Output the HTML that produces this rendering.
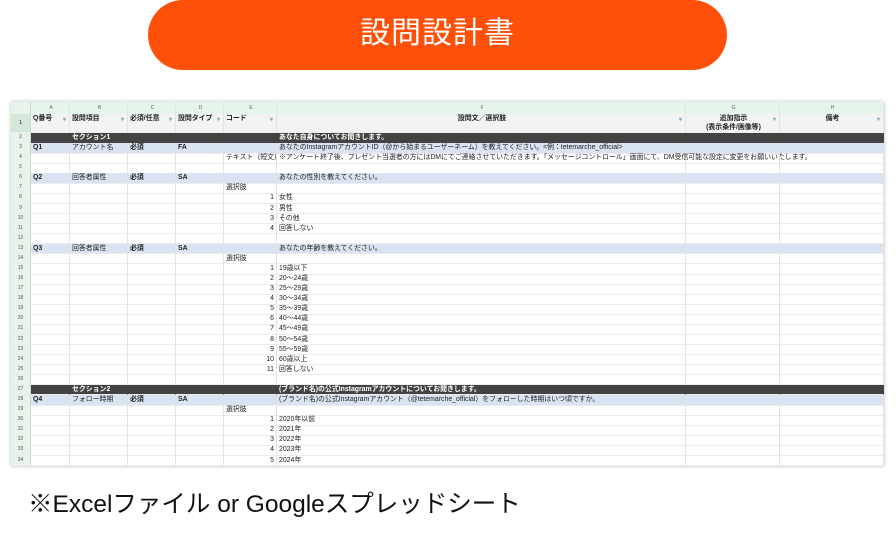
<!DOCTYPE html>
<html><head><meta charset="utf-8"><style>
*{margin:0;padding:0;box-sizing:border-box}
body{width:896px;height:539px;background:#fff;position:relative;overflow:hidden;font-family:"Liberation Sans","Noto Sans CJK JP",sans-serif}
.pill{position:absolute;left:148px;top:0;width:579px;height:70px;background:#fe5009;border-radius:35px;color:#fff;font-size:30px;text-align:center;line-height:68px;letter-spacing:1px}
.sheet{position:absolute;left:11px;top:102px;width:873px;box-shadow:0 0 4px rgba(0,0,0,.25);background:#fff}
.r{display:grid;grid-template-columns:20px 39px 58px 48px 48px 53px 409px 94px 104px;height:10.08px;font-size:6.9px;color:#222}
.r>span{border-right:1px solid #e3e3e3;border-bottom:1px solid #ececec;white-space:nowrap;overflow:visible;padding-left:2px;line-height:9.5px}
.r>span:first-child{background:#e8f3ea;color:#555;text-align:center;padding:0;font-size:5px;border-right:1px solid #cfd8d2}
.h0{height:12px}
.h0>span{background:#f8f9fa;text-align:center;font-size:5px!important;color:#666;line-height:12px!important}
.h0>span:not(:first-child){background:#e6f4ea}
.h1{height:19px;font-weight:bold}
.h1>span{background:#f3f3f3;line-height:8.5px;position:relative;padding-top:1px;overflow:hidden!important}
.h1>span:first-child{line-height:19px;background:#d3e8d8}
.h1 em{position:absolute;right:3px;top:2px;font-style:normal;color:#8aa;font-size:6px}
.s>span:not(:first-child){background:#434343;color:#fff;font-weight:bold;border-right-color:#434343}
.q>span:not(:first-child){background:#dae3f2}
.q>span:nth-child(2),.q>span:nth-child(4),.q>span:nth-child(5){font-weight:bold}
.n{text-align:right;padding-right:2px}
.foot{position:absolute;left:28px;top:485px;font-size:24.5px;color:#111}
</style></head><body>
<div class="pill">設問設計書</div>
<div class="sheet">
<div class="r h0"><span></span><span>A</span><span>B</span><span>C</span><span>D</span><span>E</span><span>F</span><span>G</span><span>H</span></div>
<div class="r h1"><span>1</span><span>Q番号<em>▾</em></span><span>設問項目<em>▾</em></span><span>必須/任意<em>▾</em></span><span>設問タイプ<em>▾</em></span><span>コード<em>▾</em></span><span style="text-align:center">設問文／選択肢<em>▾</em></span><span style="text-align:center">追加指示<br>(表示条件/画像等)<em>▾</em></span><span style="text-align:center">備考<em>▾</em></span></div>
<div class="r s"><span>2</span><span></span><span>セクション1</span><span></span><span></span><span></span><span>あなた自身についてお聞きします。</span><span></span><span></span></div>
<div class="r q"><span>3</span><span>Q1</span><span>アカウント名</span><span>必須</span><span>FA</span><span></span><span>あなたのInstagramアカウントID（@から始まるユーザーネーム）を教えてください。&lt;例：tetemarche_official&gt;</span><span></span><span></span></div>
<div class="r"><span>4</span><span></span><span></span><span></span><span></span><span>テキスト（短文）</span><span>※アンケート終了後、プレゼント当選者の方にはDMにてご連絡させていただきます。「メッセージコントロール」画面にて、DM受信可能な設定に変更をお願いいたします。</span><span></span><span></span></div>
<div class="r"><span>5</span><span></span><span></span><span></span><span></span><span></span><span></span><span></span><span></span></div>
<div class="r q"><span>6</span><span>Q2</span><span>回答者属性</span><span>必須</span><span>SA</span><span></span><span>あなたの性別を教えてください。</span><span></span><span></span></div>
<div class="r"><span>7</span><span></span><span></span><span></span><span></span><span>選択肢</span><span></span><span></span><span></span></div>
<div class="r"><span>8</span><span></span><span></span><span></span><span></span><span class="n">1</span><span>女性</span><span></span><span></span></div>
<div class="r"><span>9</span><span></span><span></span><span></span><span></span><span class="n">2</span><span>男性</span><span></span><span></span></div>
<div class="r"><span>10</span><span></span><span></span><span></span><span></span><span class="n">3</span><span>その他</span><span></span><span></span></div>
<div class="r"><span>11</span><span></span><span></span><span></span><span></span><span class="n">4</span><span>回答しない</span><span></span><span></span></div>
<div class="r"><span>12</span><span></span><span></span><span></span><span></span><span></span><span></span><span></span><span></span></div>
<div class="r q"><span>13</span><span>Q3</span><span>回答者属性</span><span>必須</span><span>SA</span><span></span><span>あなたの年齢を教えてください。</span><span></span><span></span></div>
<div class="r"><span>14</span><span></span><span></span><span></span><span></span><span>選択肢</span><span></span><span></span><span></span></div>
<div class="r"><span>15</span><span></span><span></span><span></span><span></span><span class="n">1</span><span>19歳以下</span><span></span><span></span></div>
<div class="r"><span>16</span><span></span><span></span><span></span><span></span><span class="n">2</span><span>20〜24歳</span><span></span><span></span></div>
<div class="r"><span>17</span><span></span><span></span><span></span><span></span><span class="n">3</span><span>25〜29歳</span><span></span><span></span></div>
<div class="r"><span>18</span><span></span><span></span><span></span><span></span><span class="n">4</span><span>30〜34歳</span><span></span><span></span></div>
<div class="r"><span>19</span><span></span><span></span><span></span><span></span><span class="n">5</span><span>35〜39歳</span><span></span><span></span></div>
<div class="r"><span>20</span><span></span><span></span><span></span><span></span><span class="n">6</span><span>40〜44歳</span><span></span><span></span></div>
<div class="r"><span>21</span><span></span><span></span><span></span><span></span><span class="n">7</span><span>45〜49歳</span><span></span><span></span></div>
<div class="r"><span>22</span><span></span><span></span><span></span><span></span><span class="n">8</span><span>50〜54歳</span><span></span><span></span></div>
<div class="r"><span>23</span><span></span><span></span><span></span><span></span><span class="n">9</span><span>55〜59歳</span><span></span><span></span></div>
<div class="r"><span>24</span><span></span><span></span><span></span><span></span><span class="n">10</span><span>60歳以上</span><span></span><span></span></div>
<div class="r"><span>25</span><span></span><span></span><span></span><span></span><span class="n">11</span><span>回答しない</span><span></span><span></span></div>
<div class="r"><span>26</span><span></span><span></span><span></span><span></span><span></span><span></span><span></span><span></span></div>
<div class="r s"><span>27</span><span></span><span>セクション2</span><span></span><span></span><span></span><span>(ブランド名)の公式Instagramアカウントについてお聞きします。</span><span></span><span></span></div>
<div class="r q"><span>28</span><span>Q4</span><span>フォロー時期</span><span>必須</span><span>SA</span><span></span><span>(ブランド名)の公式Instagramアカウント（@tetemarche_official）をフォローした時期はいつ頃ですか。</span><span></span><span></span></div>
<div class="r"><span>29</span><span></span><span></span><span></span><span></span><span>選択肢</span><span></span><span></span><span></span></div>
<div class="r"><span>30</span><span></span><span></span><span></span><span></span><span class="n">1</span><span>2020年以前</span><span></span><span></span></div>
<div class="r"><span>31</span><span></span><span></span><span></span><span></span><span class="n">2</span><span>2021年</span><span></span><span></span></div>
<div class="r"><span>32</span><span></span><span></span><span></span><span></span><span class="n">3</span><span>2022年</span><span></span><span></span></div>
<div class="r"><span>33</span><span></span><span></span><span></span><span></span><span class="n">4</span><span>2023年</span><span></span><span></span></div>
<div class="r" style="overflow:hidden"><span>34</span><span></span><span></span><span></span><span></span><span class="n">5</span><span>2024年</span><span></span><span></span></div>
</div>
<div class="foot">※Excelファイル or Googleスプレッドシート</div>
</body></html>
